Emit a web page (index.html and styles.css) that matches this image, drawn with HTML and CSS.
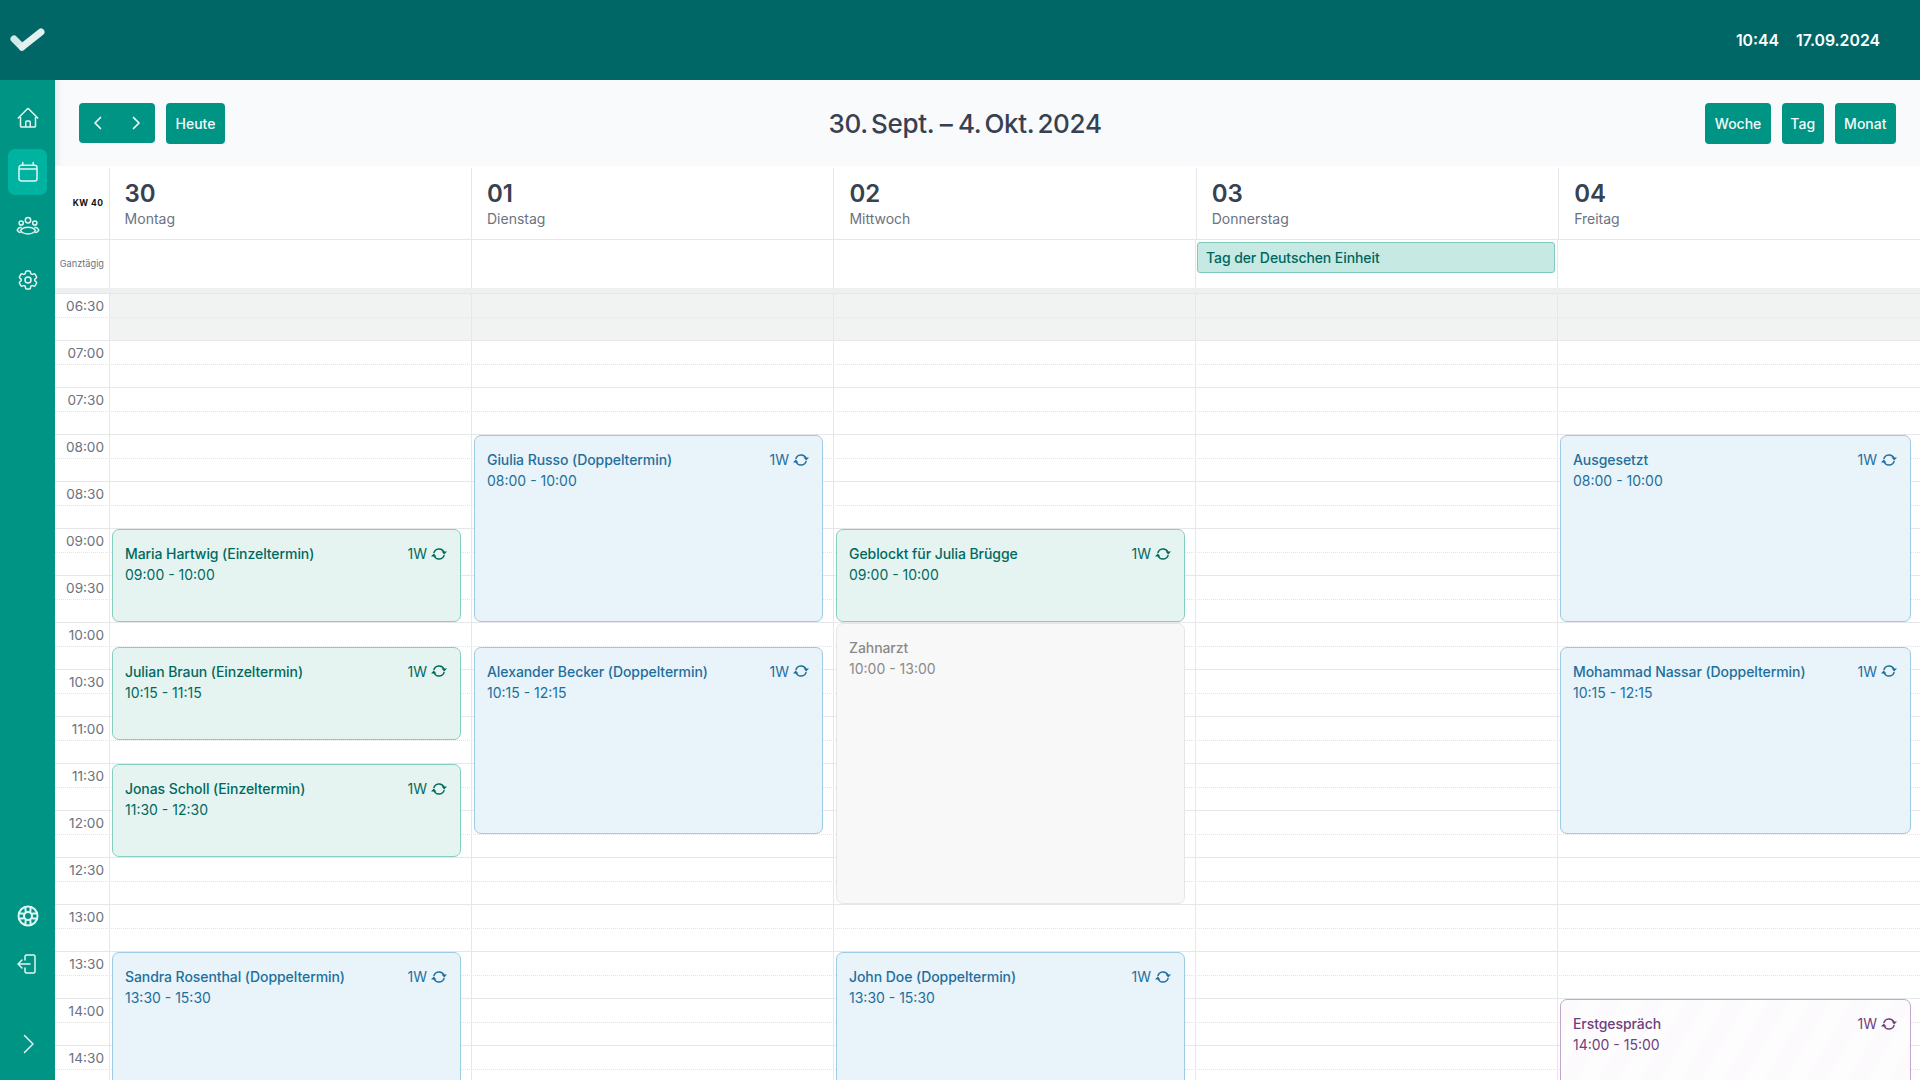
FILE: index.html
```html
<!DOCTYPE html>
<html lang="de">
<head>
    <meta charset="UTF-8">
    <title>Kalender</title>
    <link rel="stylesheet" href="styles.css">
</head>
<body>
    <svg class="sprite" aria-hidden="true">
        <symbol id="i-sync" viewBox="0 0 16 14">
            <path class="line" d="M2.800 6.200A5.400 5.400 0 0 1 13 5.200M13.200 7.800A5.400 5.400 0 0 1 3 8.800"/>
            <path class="solid" d="M10.600 4.600H16L13.200 7.600zM5.400 9.400H0L2.800 6.400z"/>
        </symbol>
    </svg>

    <header class="topbar">
        <svg class="logo" viewBox="0 0 55 80">
            <path class="logo-short" d="M14 39L22 47"/>
            <path class="logo-long" d="M22 47L41 32"/>
        </svg>
        <div class="clock">
            <span>10:44</span>
            <span>17.09.2024</span>
        </div>
    </header>

    <div class="layout">
        <nav class="sidebar">
            <a class="nav-item">
                <svg viewBox="0 0 24 24"><path d="M2.25 12l8.954-8.955c.44-.439 1.152-.439 1.591 0L21.75 12M4.5 9.75v10.125c0 .621.504 1.125 1.125 1.125H9.75v-4.875c0-.621.504-1.125 1.125-1.125h2.25c.621 0 1.125.504 1.125 1.125V21h4.125c.621 0 1.125-.504 1.125-1.125V9.75M8.25 21h8.25"/></svg>
            </a>
            <a class="nav-item active">
                <svg viewBox="0 0 24 24"><path d="M6.750 2.500v2.750M17.250 2.500v2.750M3 18.750V7.500a2.250 2.250 0 012.250-2.250h13.500A2.250 2.250 0 0121 7.500v11.250A2.250 2.250 0 0118.750 21H5.250A2.250 2.250 0 013 18.750zM3 9h18"/></svg>
            </a>
            <a class="nav-item">
                <svg viewBox="0 0 24 24"><circle cx="12" cy="6.200" r="2.700"/><circle cx="5.200" cy="9" r="2.100"/><circle cx="18.800" cy="9" r="2.100"/><path d="M4.500 16.500C7 12 17 12 19.500 16.500 17 21 7 21 4.500 16.500zM5 13.300c-1.800.3-3.200 1.300-3.800 2.700.5 1.300 1.600 2.200 3 2.600M19 13.300c1.800.3 3.200 1.300 3.800 2.700-.5 1.300-1.600 2.200-3 2.600"/></svg>
            </a>
            <a class="nav-item">
                <svg viewBox="0 0 24 24"><path d="M9.594 3.940c.09-.542.56-.94 1.110-.94h2.593c.55 0 1.020.398 1.110.94l.213 1.281c.063.374.313.686.645.870.074.04.147.083.22.127.324.196.72.257 1.075.124l1.217-.456a1.125 1.125 0 011.370.49l1.296 2.247a1.125 1.125 0 01-.26 1.431l-1.003.827c-.293.24-.438.613-.431.992a6.759 6.759 0 010 .255c-.007.378.138.75.43.99l1.005.828c.424.35.534.954.26 1.430l-1.298 2.247a1.125 1.125 0 01-1.369.491l-1.217-.456c-.355-.133-.75-.072-1.076.124a6.57 6.57 0 01-.22.128c-.331.183-.581.495-.644.869l-.213 1.280c-.09.543-.56.941-1.110.941h-2.594c-.55 0-1.020-.398-1.110-.94l-.213-1.281c-.062-.374-.312-.686-.644-.87a6.52 6.52 0 01-.22-.127c-.325-.196-.72-.257-1.076-.124l-1.217.456a1.125 1.125 0 01-1.369-.49l-1.297-2.247a1.125 1.125 0 01.26-1.431l1.004-.827c.292-.24.437-.613.43-.992a6.932 6.932 0 010-.255c.007-.378-.138-.75-.43-.99l-1.004-.828a1.125 1.125 0 01-.26-1.430l1.297-2.247a1.125 1.125 0 011.370-.491l1.216.456c.356.133.751.072 1.076-.124.072-.044.146-.087.22-.128.332-.183.582-.495.644-.869l.214-1.281z"/><path d="M15 12a3 3 0 11-6 0 3 3 0 016 0z"/></svg>
            </a>
            <a class="nav-item nav-bottom">
                <svg viewBox="0 0 24 24"><circle cx="12" cy="12" r="9.500"/><circle cx="12" cy="12" r="4"/><path d="M9.200 2.900l.6 5.400M14.800 2.900l-.6 5.400M2.900 9.200l5.400.6M2.900 14.800l5.400-.6M21.100 9.200l-5.400.6M21.100 14.800l-5.400-.6M9.200 21.100l.6-5.400M14.800 21.100l-.6-5.400"/></svg>
            </a>
            <a class="nav-item">
                <svg viewBox="0 0 24 24"><path d="M9 8V4.500A1.500 1.500 0 0110.500 3h7A1.500 1.500 0 0119 4.500v15a1.500 1.500 0 01-1.500 1.500h-7A1.500 1.500 0 019 19.500V16M14 12H2.500M6 8l-4 4 4 4"/></svg>
            </a>
            <a class="nav-item nav-toggle">
                <svg viewBox="0 0 24 24"><path d="M8.500 3.500l8.500 8.500-8.500 8.500"/></svg>
            </a>
        </nav>

        <main class="content">
            <div class="toolbar">
                <div class="toolbar-group">
                    <div class="btn-pair">
                        <button class="btn btn-icon"><svg viewBox="0 0 16 16"><path d="M10.500 2.500L5 8l5.500 5.500"/></svg></button>
                        <button class="btn btn-icon"><svg viewBox="0 0 16 16"><path d="M5.500 2.500L11 8l-5.500 5.500"/></svg></button>
                    </div>
                    <button class="btn">Heute</button>
                </div>
                <h1>30. Sept. <span class="dash">–</span> 4. Okt. 2024</h1>
                <div class="toolbar-group">
                    <button class="btn">Woche</button>
                    <button class="btn btn-narrow">Tag</button>
                    <button class="btn">Monat</button>
                </div>
            </div>

            <div class="cal-row cal-head">
                <div class="week-no">KW 40</div>
                <div class="day-head"><b>30</b><span>Montag</span></div>
                <div class="day-head"><b>01</b><span>Dienstag</span></div>
                <div class="day-head"><b>02</b><span>Mittwoch</span></div>
                <div class="day-head"><b>03</b><span>Donnerstag</span></div>
                <div class="day-head"><b>04</b><span>Freitag</span></div>
            </div>

            <div class="cal-row cal-allday">
                <div class="allday-label">Ganztägig</div>
                <div class="allday-cell"></div>
                <div class="allday-cell"></div>
                <div class="allday-cell"></div>
                <div class="allday-cell"><div class="allday-event">Tag der Deutschen Einheit</div></div>
                <div class="allday-cell"></div>
            </div>

            <div class="time-grid">
                <div class="lines">
                    <i></i><i></i><i></i><i></i><i></i><i></i><i></i><i></i><i></i>
                    <i></i><i></i><i></i><i></i><i></i><i></i><i></i><i></i><i></i>
                </div>
                <div class="cal-row">
                    <div class="hours">
                        <div>06:30</div><div>07:00</div><div>07:30</div><div>08:00</div><div>08:30</div>
                        <div>09:00</div><div>09:30</div><div>10:00</div><div>10:30</div><div>11:00</div>
                        <div>11:30</div><div>12:00</div><div>12:30</div><div>13:00</div><div>13:30</div>
                        <div>14:00</div><div>14:30</div>
                    </div>

                    <div class="day">
                        <div class="closed"></div>
                        <div class="event green" style="grid-row: 11 / span 4">
                            <div class="event-top"><strong>Maria Hartwig (Einzeltermin)</strong><span class="repeat">1W <svg><use href="#i-sync"/></svg></span></div>
                            <div>09:00 - 10:00</div>
                        </div>
                        <div class="event green" style="grid-row: 16 / span 4">
                            <div class="event-top"><strong>Julian Braun (Einzeltermin)</strong><span class="repeat">1W <svg><use href="#i-sync"/></svg></span></div>
                            <div>10:15 - 11:15</div>
                        </div>
                        <div class="event green" style="grid-row: 21 / span 4">
                            <div class="event-top"><strong>Jonas Scholl (Einzeltermin)</strong><span class="repeat">1W <svg><use href="#i-sync"/></svg></span></div>
                            <div>11:30 - 12:30</div>
                        </div>
                        <div class="event blue" style="grid-row: 29 / span 8">
                            <div class="event-top"><strong>Sandra Rosenthal (Doppeltermin)</strong><span class="repeat">1W <svg><use href="#i-sync"/></svg></span></div>
                            <div>13:30 - 15:30</div>
                        </div>
                    </div>

                    <div class="day">
                        <div class="closed"></div>
                        <div class="event blue" style="grid-row: 7 / span 8">
                            <div class="event-top"><strong>Giulia Russo (Doppeltermin)</strong><span class="repeat">1W <svg><use href="#i-sync"/></svg></span></div>
                            <div>08:00 - 10:00</div>
                        </div>
                        <div class="event blue" style="grid-row: 16 / span 8">
                            <div class="event-top"><strong>Alexander Becker (Doppeltermin)</strong><span class="repeat">1W <svg><use href="#i-sync"/></svg></span></div>
                            <div>10:15 - 12:15</div>
                        </div>
                    </div>

                    <div class="day">
                        <div class="closed"></div>
                        <div class="event green" style="grid-row: 11 / span 4">
                            <div class="event-top"><strong>Geblockt für Julia Brügge</strong><span class="repeat">1W <svg><use href="#i-sync"/></svg></span></div>
                            <div>09:00 - 10:00</div>
                        </div>
                        <div class="event gray" style="grid-row: 15 / span 12">
                            <div class="event-top"><strong>Zahnarzt</strong></div>
                            <div>10:00 - 13:00</div>
                        </div>
                        <div class="event blue" style="grid-row: 29 / span 8">
                            <div class="event-top"><strong>John Doe (Doppeltermin)</strong><span class="repeat">1W <svg><use href="#i-sync"/></svg></span></div>
                            <div>13:30 - 15:30</div>
                        </div>
                    </div>

                    <div class="day">
                        <div class="closed"></div>
                    </div>

                    <div class="day">
                        <div class="closed"></div>
                        <div class="event blue" style="grid-row: 7 / span 8">
                            <div class="event-top"><strong>Ausgesetzt</strong><span class="repeat">1W <svg><use href="#i-sync"/></svg></span></div>
                            <div>08:00 - 10:00</div>
                        </div>
                        <div class="event blue" style="grid-row: 16 / span 8">
                            <div class="event-top"><strong>Mohammad Nassar (Doppeltermin)</strong><span class="repeat">1W <svg><use href="#i-sync"/></svg></span></div>
                            <div>10:15 - 12:15</div>
                        </div>
                        <div class="event purple" style="grid-row: 31 / span 4">
                            <div class="event-top"><strong>Erstgespräch</strong><span class="repeat">1W <svg><use href="#i-sync"/></svg></span></div>
                            <div>14:00 - 15:00</div>
                        </div>
                    </div>
                </div>
            </div>
        </main>
    </div>
</body>
</html>
```

FILE: styles.css
```css
* {
    box-sizing: border-box;
}
html, body {
    height: 100%;
}
body {
    margin: 0;
    overflow: hidden;
    font-family: 'Inter', 'Liberation Sans', sans-serif;
    font-size: 14px;
    color: #374151;
    background: #fff;
}
.sprite {
    display: none;
}

/* top bar */
.topbar {
    height: 80px;
    background: #006666;
    color: #fff;
    display: flex;
    align-items: center;
    justify-content: space-between;
    padding-right: 40px;
}
.logo {
    width: 55px;
    height: 80px;
    fill: none;
    stroke-width: 7;
    stroke-linecap: round;
}
.logo-short {
    stroke: #d3e8e8;
}
.logo-long {
    stroke: #e4f1f1;
}
.clock {
    display: flex;
    gap: 17px;
    font-size: 15.8px;
    font-weight: 600;
}

.layout {
    display: flex;
    height: 1000px;
}

/* sidebar */
.sidebar {
    width: 55px;
    flex: none;
    background: #009484;
    display: flex;
    flex-direction: column;
    align-items: center;
    gap: 8px;
    padding: 15px 0 13px;
}
.nav-item {
    width: 39px;
    height: 46px;
    border-radius: 7px;
    display: flex;
    align-items: center;
    justify-content: center;
}
.nav-item svg {
    width: 24px;
    height: 24px;
    fill: none;
    stroke: #e2f7f4;
    stroke-width: 1.5;
    stroke-linecap: round;
    stroke-linejoin: round;
}
.nav-item.active {
    background: #00b3a1;
}
.nav-bottom {
    margin-top: auto;
}
.nav-bottom svg {
    stroke-width: 2;
}
.nav-bottom + .nav-item {
    margin-top: -6px;
}
.nav-toggle {
    margin-top: 26px;
}

/* toolbar */
.content {
    flex: 1;
    min-width: 0;
    display: flex;
    flex-direction: column;
    overflow: hidden;
}
.toolbar {
    height: 86px;
    flex: none;
    background: #f9fafc;
    display: flex;
    justify-content: space-between;
    align-items: center;
    padding: 0 24px;
    box-shadow: inset 10px 0 10px -10px rgba(0,0,0,0.12);
}
.toolbar h1 {
    margin: 0;
    font-size: 26px;
    font-weight: 500;
    letter-spacing: -0.3px;
    word-spacing: -3.4px;
    color: #374151;
}
.dash {
    margin: 0 2.4px;
}
.toolbar-group {
    display: flex;
    gap: 11px;
}
.btn {
    height: 41px;
    padding: 0 9.5px;
    border: none;
    border-radius: 4px;
    background: #009484;
    color: #f2fbfa;
    font-family: inherit;
    font-size: 14px;
    font-weight: 500;
}
.btn-narrow {
    padding: 0 8.5px;
}
.btn-pair {
    display: flex;
    height: 40px;
}
.btn-pair .btn {
    height: 40px;
    width: 38px;
    padding: 0;
    display: flex;
    align-items: center;
    justify-content: center;
}
.btn-pair .btn:first-child {
    border-radius: 4px 0 0 4px;
}
.btn-pair .btn:last-child {
    border-radius: 0 4px 4px 0;
}
.btn-icon svg {
    width: 16px;
    height: 16px;
    fill: none;
    stroke: #f2fbfa;
    stroke-width: 1.7;
    stroke-linecap: round;
    stroke-linejoin: round;
}

/* calendar rows */
.cal-row {
    display: grid;
    grid-template-columns: 54px repeat(4, 362px) 1fr;
    flex: none;
}
.cal-head {
    height: 74px;
    border-bottom: 1px solid #e5e7eb;
    grid-template-columns: 53.6px repeat(5, 362.4px);
}
.week-no {
    font-size: 8.5px;
    font-weight: 700;
    letter-spacing: 0.5px;
    color: #111;
    text-align: right;
    padding: 32px 5px 0 0;
}
.day-head {
    border-left: 1px solid #e5e7eb;
    margin-top: 2px;
    padding: 11px 0 0 15px;
    display: flex;
    flex-direction: column;
}
.day-head b {
    font-size: 24px;
    line-height: 29px;
    font-weight: 600;
    color: #374151;
}
.day-head span {
    font-size: 14px;
    line-height: 20px;
    margin-top: 1px;
    color: #6b7280;
}
.cal-allday {
    height: 48px;
}
.allday-label {
    font-size: 9.2px;
    color: #6b7280;
    text-align: right;
    padding: 18px 5px 0 0;
    white-space: nowrap;
}
.allday-cell {
    border-left: 1px solid #e5e7eb;
    padding: 2px 2px 0 1px;
}
.allday-event {
    height: 31px;
    border: 1px solid #7fcabd;
    border-radius: 3px;
    background: #c6e9e4;
    color: #00665c;
    font-weight: 500;
    letter-spacing: -0.08px;
    line-height: 29px;
    padding-left: 8px;
}

/* time grid */
.time-grid {
    position: relative;
    flex: 1;
    border-top: 5px solid #eeeff0;
    box-shadow: inset 0 1px 0 #e5e7eb;
}
.lines {
    position: absolute;
    inset: 0;
}
.lines i {
    display: block;
    height: 47px;
    border-top: 1px solid #e5e7eb;
    position: relative;
}
.lines i::after {
    content: "";
    position: absolute;
    left: 0;
    right: 0;
    top: 23px;
    border-top: 1px dotted #e3e4e6;
}
.hours {
    position: relative;
}
.hours div {
    height: 47px;
    padding: 3px 5px 0 0;
    line-height: 20px;
    text-align: right;
    color: #6b7280;
    font-size: 13.6px;
}
.day {
    position: relative;
    border-left: 1px solid #e5e7eb;
    display: grid;
    grid-template-rows: repeat(36, 23.5px);
}
.closed {
    grid-row: 1 / span 2;
    grid-column: 1;
    background: rgba(230,231,232,0.55);
}
.event {
    grid-column: 1;
    min-width: 0;
    margin: 1px 10px 0 2px;
    padding: 13px 13px 0 12px;
    border: 1px solid;
    border-radius: 7px;
    line-height: 21px;
    font-size: 14px;
    z-index: 1;
}
.day:last-child .event {
    margin-right: 9px;
}
.event-top {
    display: flex;
    justify-content: space-between;
}
.event strong {
    font-weight: 500;
    letter-spacing: -0.07px;
}
.repeat {
    display: flex;
    align-items: center;
    gap: 4px;
}
.repeat svg {
    width: 16px;
    height: 14px;
}
.line {
    fill: none;
    stroke: currentColor;
    stroke-width: 1.4;
}
.solid {
    fill: currentColor;
    stroke: none;
}
.green {
    background: #e6f4f1;
    border-color: #85cfc1;
    color: #00695f;
}
.blue {
    background: #e8f3fa;
    border-color: #9ccbe3;
    color: #1f6f9c;
}
.gray {
    background: #f8f8f8;
    border-color: #e6e6e6;
    color: #8a8a8a;
}
.purple {
    background: repeating-linear-gradient(120deg, #fdfafd 0 18px, #fefdfe 18px 36px);
    border-color: #c3a6cd;
    color: #6e3f7c;
}
```
